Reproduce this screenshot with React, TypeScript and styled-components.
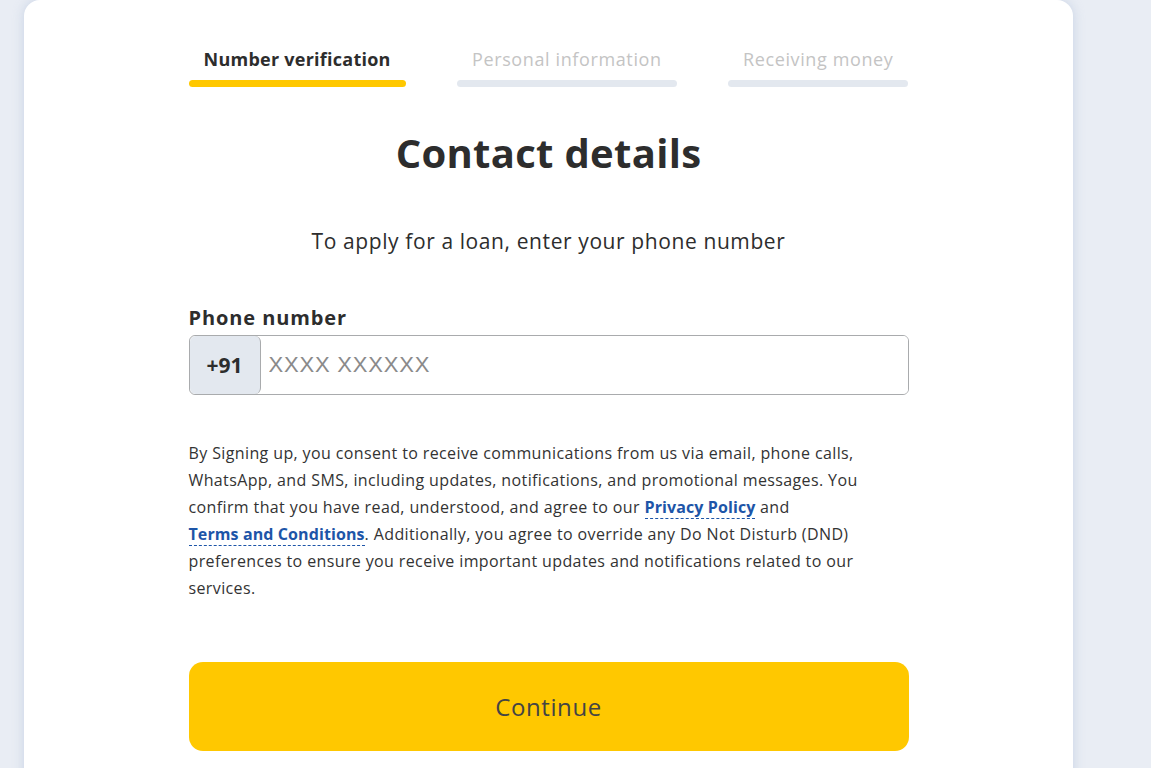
import React from 'react';
import styled, { createGlobalStyle } from 'styled-components';

const GlobalStyle = createGlobalStyle`
  html, body {
    margin: 0;
    padding: 0;
    background: #e9edf4;
    font-family: "Open Sans", Lato, sans-serif;
    color: #2d2d2d;
  }
  * {
    box-sizing: border-box;
  }
`;

const SCPage = styled.div`
  padding-left: 24px;
  width: 1151px;
  height: 768px;
  overflow: hidden;
`;

const SCCard = styled.div`
  width: 1049px;
  min-height: 800px;
  background: #fff;
  border-radius: 16px;
  box-shadow: 0 0 12px rgba(160, 180, 210, 0.45);
  padding-top: 46px;
  display: flex;
  justify-content: center;
`;

const SCContent = styled.div`
  width: 720px;
  display: flex;
  flex-direction: column;
`;

const SCSteps = styled.div`
  display: flex;
  justify-content: space-between;
`;

const SCStep = styled.div<{ $active?: boolean }>`
  display: flex;
  flex-direction: column;
  align-items: center;
  gap: 8px;
  font-size: 18px;
  font-weight: ${(p) => (p.$active ? 700 : 400)};
  letter-spacing: ${(p) => (p.$active ? '0.25px' : '0.62px')};
  color: ${(p) => (p.$active ? '#2d2d2d' : '#c4c4c4')};
  span {
    padding: 0 15px;
    line-height: 26px;
  }
  &::after {
    content: '';
    display: block;
    width: 100%;
    height: 7px;
    border-radius: 4px;
    background: ${(p) => (p.$active ? '#ffc800' : '#e3e8ef')};
  }
`;

const SCTitle = styled.h1`
  margin: 38px 0 0;
  text-align: center;
  font-size: 40px;
  line-height: 56px;
  font-weight: 700;
  letter-spacing: 0.3px;
  color: #2d2d2d;
`;

const SCSubtitle = styled.p`
  margin: 45px 0 0;
  text-align: center;
  font-size: 21px;
  line-height: 30px;
  letter-spacing: 0.6px;
  color: #2d2d2d;
`;

const SCLabel = styled.label`
  margin-top: 47px;
  font-size: 20px;
  font-weight: 700;
  line-height: 30px;
  letter-spacing: 0.9px;
  color: #2d2d2d;
`;

const SCInputRow = styled.div`
  margin-top: 2px;
  display: flex;
  height: 60px;
  border: 1px solid #a9abad;
  border-radius: 6px;
  overflow: hidden;
`;

const SCPrefix = styled.div`
  width: 71px;
  display: flex;
  align-items: center;
  justify-content: center;
  background: #e3e8ef;
  border-right: 1px solid #a9abad;
  border-radius: 6px;
  font-size: 21px;
  font-weight: 700;
  color: #2d2d2d;
`;

const SCInput = styled.input`
  flex: 1;
  border: none;
  outline: none;
  padding: 0 8px;
  font-family: "Liberation Sans", Arial, sans-serif;
  font-size: 22px;
  letter-spacing: 0.8px;
  color: #2d2d2d;
  &::placeholder {
    color: #8a8a8a;
  }
`;

const SCConsent = styled.p`
  margin: 45px 0 0;
  font-size: 16px;
  line-height: 27px;
  letter-spacing: 0.38px;
  color: #333;
`;

const SCLink = styled.a`
  color: #1d55a8;
  font-weight: 700;
  letter-spacing: 0.1px;
  white-space: nowrap;
  text-decoration: none;
  border-bottom: 1px dashed #1d55a8;
`;

const SCButton = styled.button`
  margin-top: 60px;
  height: 89px;
  border: none;
  border-radius: 14px;
  background: #ffc800;
  font-family: inherit;
  font-size: 24px;
  letter-spacing: 0.6px;
  color: #444;
  cursor: pointer;
`;

const App = () => {
  return (
    <>
      <GlobalStyle />
      <SCPage>
        <SCCard>
          <SCContent>
            <SCSteps>
              <SCStep $active>
                <span>Number verification</span>
              </SCStep>
              <SCStep>
                <span>Personal information</span>
              </SCStep>
              <SCStep>
                <span>Receiving money</span>
              </SCStep>
            </SCSteps>

            <SCTitle>Contact details</SCTitle>
            <SCSubtitle>To apply for a loan, enter your phone number</SCSubtitle>

            <SCLabel htmlFor="phone">Phone number</SCLabel>
            <SCInputRow>
              <SCPrefix>+91</SCPrefix>
              <SCInput id="phone" placeholder="XXXX XXXXXX" />
            </SCInputRow>

            <SCConsent>
              By Signing up, you consent to receive communications from us via email, phone calls,
              WhatsApp, and SMS, including updates, notifications, and promotional messages. You
              confirm that you have read, understood, and agree to our{' '}
              <SCLink href="#">Privacy Policy</SCLink> and <SCLink href="#">Terms and Conditions</SCLink>.
              Additionally, you agree to override any Do Not Disturb (DND) preferences to ensure you
              receive important updates and notifications related to our services.
            </SCConsent>

            <SCButton>Continue</SCButton>
          </SCContent>
        </SCCard>
      </SCPage>
    </>
  );
};

export default App;
